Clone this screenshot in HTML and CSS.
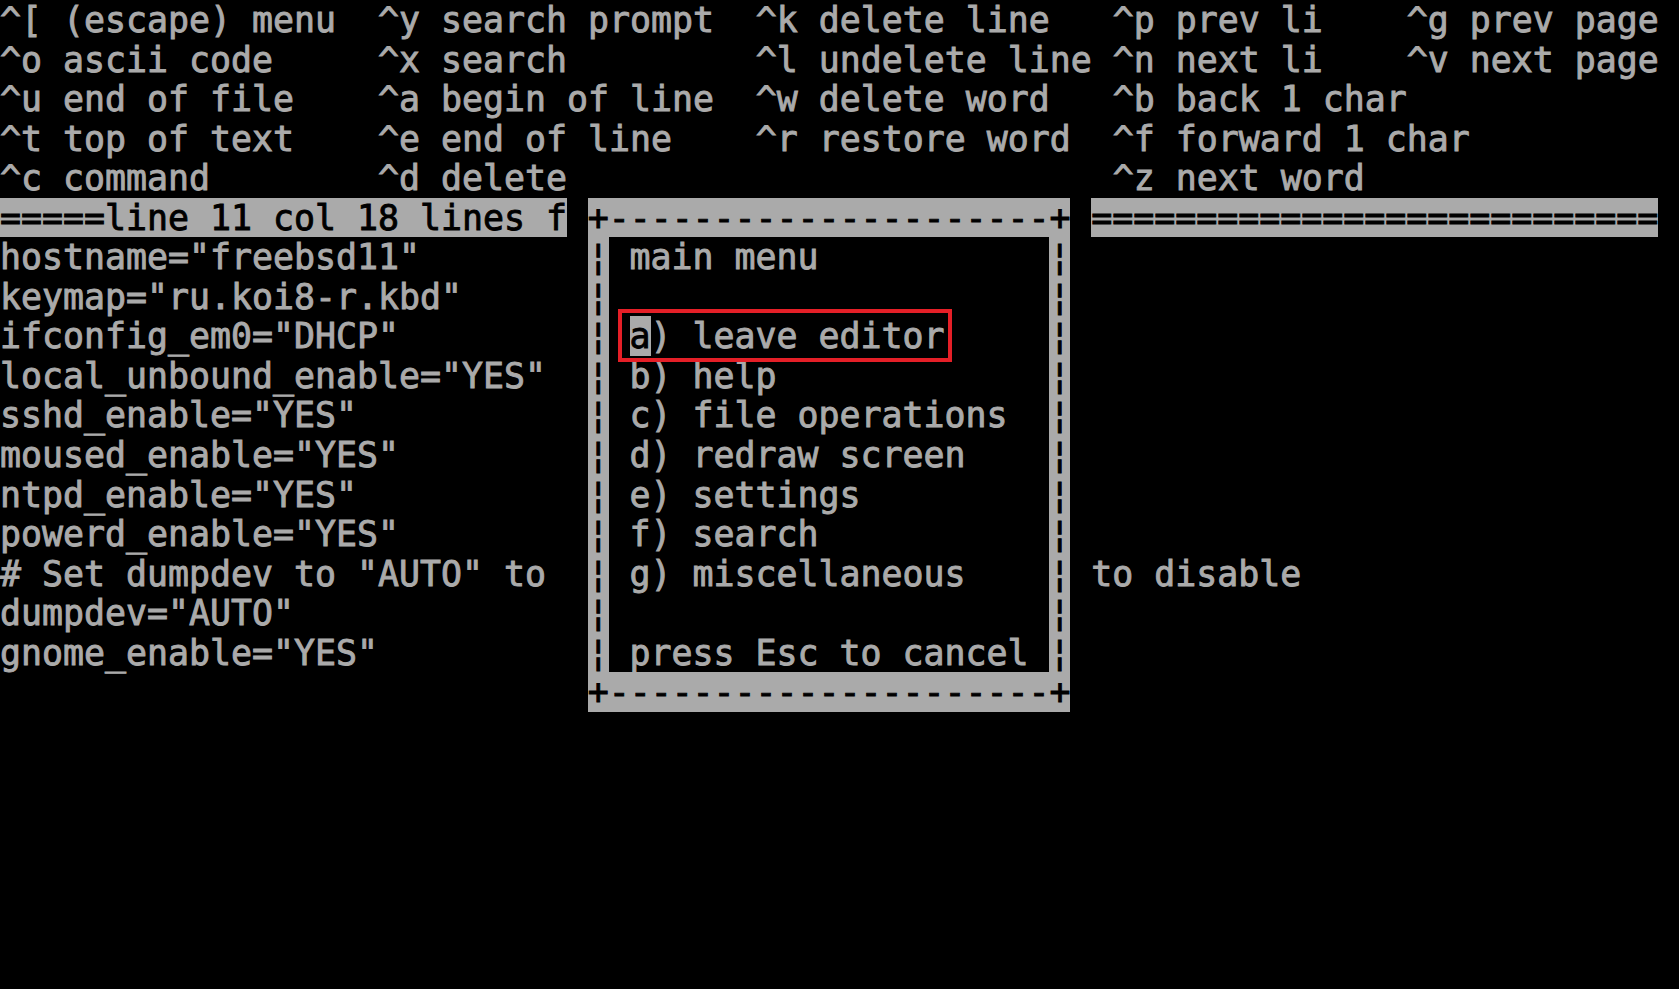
FILE: index.html
```html
<!DOCTYPE html>
<html lang="en">
<head>
    <meta charset="UTF-8">
    <title>ee - rc.conf</title>
    <link rel="stylesheet" href="styles.css">
</head>
<body>

<div class="screen">
    <!--help lines-->
    <div class="help">
        <div class="row">^[ (escape) menu  ^y search prompt  ^k delete line   ^p prev li    ^g prev page</div>
        <div class="row">^o ascii code     ^x search         ^l undelete line ^n next li    ^v next page</div>
        <div class="row">^u end of file    ^a begin of line  ^w delete word   ^b back 1 char</div>
        <div class="row">^t top of text    ^e end of line    ^r restore word  ^f forward 1 char</div>
        <div class="row">^c command        ^d delete                          ^z next word</div>
    </div>

    <!--file text + menu window-->
    <div class="middle">
        <div class="file">
            <div class="row status">=====line 11 col 18 lines f</div>
            <div class="row">hostname="freebsd11"</div>
            <div class="row">keymap="ru.koi8-r.kbd"</div>
            <div class="row">ifconfig_em0="DHCP"</div>
            <div class="row">local_unbound_enable="YES"</div>
            <div class="row">sshd_enable="YES"</div>
            <div class="row">moused_enable="YES"</div>
            <div class="row">ntpd_enable="YES"</div>
            <div class="row">powerd_enable="YES"</div>
            <div class="row"># Set dumpdev to "AUTO" to</div>
            <div class="row">dumpdev="AUTO"</div>
            <div class="row">gnome_enable="YES"</div>
        </div>

        <div class="menu">
            <div class="row edge">+---------------------+</div>
            <div class="menu-body">
                <div class="side">
                    <div class="row">¦</div><div class="row">¦</div><div class="row">¦</div>
                    <div class="row">¦</div><div class="row">¦</div><div class="row">¦</div>
                    <div class="row">¦</div><div class="row">¦</div><div class="row">¦</div>
                    <div class="row">¦</div><div class="row">¦</div>
                </div>
                <div class="items">
                    <div class="row">main menu</div>
                    <div class="row"></div>
                    <div class="row"><span class="cursor">a</span>) leave editor</div>
                    <div class="row">b) help</div>
                    <div class="row">c) file operations</div>
                    <div class="row">d) redraw screen</div>
                    <div class="row">e) settings</div>
                    <div class="row">f) search</div>
                    <div class="row">g) miscellaneous</div>
                    <div class="row"></div>
                    <div class="row">press Esc to cancel</div>
                </div>
                <div class="side">
                    <div class="row">¦</div><div class="row">¦</div><div class="row">¦</div>
                    <div class="row">¦</div><div class="row">¦</div><div class="row">¦</div>
                    <div class="row">¦</div><div class="row">¦</div><div class="row">¦</div>
                    <div class="row">¦</div><div class="row">¦</div>
                </div>
            </div>
            <div class="row edge">+---------------------+</div>
        </div>

        <div class="file">
            <div class="row status">===========================</div>
            <div class="row"></div>
            <div class="row"></div>
            <div class="row"></div>
            <div class="row"></div>
            <div class="row"></div>
            <div class="row"></div>
            <div class="row"></div>
            <div class="row"></div>
            <div class="row">to disable</div>
        </div>
    </div>

    <!--red mark around the first item-->
    <div class="mark"></div>
</div>

</body>
</html>
```

FILE: styles.css
```css
* {
    margin: 0;
    padding: 0;
    box-sizing: border-box;
}

:root {
    /*one character cell of the 80x25 console*/
    --cw: calc(1679px / 80);
    --rh: calc(989px / 25);
    --fg: #aaaaaa;
}

body {
    background-color: #000;
}

.screen {
    position: relative;
    width: 1679px;
    height: 989px;
    overflow: hidden;

    background-color: #000;
    color: var(--fg);
    font-family: "DejaVu Sans Mono", "Liberation Mono", monospace;
    font-size: 34.88px;
    -webkit-text-stroke: 0.9px currentColor;
}

.row {
    height: var(--rh);
    line-height: 40.5px;
    white-space: pre;
}

.middle {
    display: grid;
    grid-template-columns: calc(var(--cw) * 27) calc(var(--cw) * 23) calc(var(--cw) * 27);
    column-gap: var(--cw);
    align-items: start;
}

.status {
    background-color: var(--fg);
    color: #000;
}

/*popup window*/
.menu {
    background-color: var(--fg);
    color: #000;
}

.menu-body {
    display: flex;
}

.side {
    width: var(--cw);
    flex: none;
}

.items {
    flex: 1;
    padding-left: var(--cw);
    background-color: #000;
    color: var(--fg);
}

.cursor {
    background-color: var(--fg);
    color: #000;
}

.mark {
    position: absolute;
    left: 618px;
    top: 309px;
    width: 334px;
    height: 53px;
    border: 4px solid #e51f27;
}
```
